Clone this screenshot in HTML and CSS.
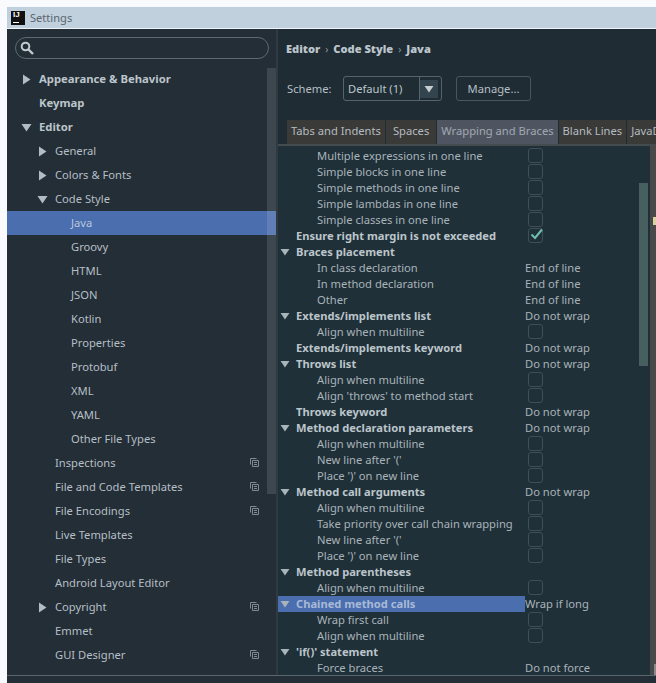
FILE: index.html
```html
<!DOCTYPE html>
<html lang="en">
<head>
<meta charset="utf-8">
<title>Settings</title>
<link rel="stylesheet" href="styles.css">
</head>
<body>
<svg class="defs" width="0" height="0" aria-hidden="true">
  <symbol id="right" viewBox="0 0 9 11"><path d="M1 0.5L8.5 5.5L1 10.5Z" fill="currentColor"/></symbol>
  <symbol id="down" viewBox="0 0 11 9"><path d="M0.5 1H10.5L5.5 8.5Z" fill="currentColor"/></symbol>
  <symbol id="proj" viewBox="0 0 9 9"><path d="M0.5 6.5V0.5H6.5M2.5 2.5H8.5V8.5H2.5ZM4 4.5H7M4 6.5H7" fill="none" stroke="currentColor" stroke-width="1"/></symbol>
</svg>
<div class="window">
  <header class="titlebar">
    <div class="logo"><span class="logo-text">IJ</span><span class="logo-bar"></span></div>
    <span class="title">Settings</span>
  </header>
  <div class="dialog">
    <aside class="sidebar">
      <div class="search">
        <svg class="search-icon" viewBox="0 0 14 14"><circle cx="5.5" cy="5.5" r="3.8" fill="none" stroke="currentColor" stroke-width="2"/><path d="M8.5 8.5L13 13" stroke="currentColor" stroke-width="2.4"/></svg>
      </div>
      <div class="tree">
        <div class="node bold l0"><svg class="arrow ar"><use href="#right"/></svg>Appearance &amp; Behavior</div>
        <div class="node bold l0">Keymap</div>
        <div class="node bold l0"><svg class="arrow ad"><use href="#down"/></svg>Editor</div>
        <div class="node l1"><svg class="arrow ar"><use href="#right"/></svg>General</div>
        <div class="node l1"><svg class="arrow ar"><use href="#right"/></svg>Colors &amp; Fonts</div>
        <div class="node l1"><svg class="arrow ad"><use href="#down"/></svg>Code Style</div>
        <div class="node l2 selected">Java</div>
        <div class="node l2">Groovy</div>
        <div class="node l2">HTML</div>
        <div class="node l2">JSON</div>
        <div class="node l2">Kotlin</div>
        <div class="node l2">Properties</div>
        <div class="node l2">Protobuf</div>
        <div class="node l2">XML</div>
        <div class="node l2">YAML</div>
        <div class="node l2">Other File Types</div>
        <div class="node l1">Inspections<svg class="proj"><use href="#proj"/></svg></div>
        <div class="node l1">File and Code Templates<svg class="proj"><use href="#proj"/></svg></div>
        <div class="node l1">File Encodings<svg class="proj"><use href="#proj"/></svg></div>
        <div class="node l1">Live Templates</div>
        <div class="node l1">File Types</div>
        <div class="node l1">Android Layout Editor</div>
        <div class="node l1"><svg class="arrow ar"><use href="#right"/></svg>Copyright<svg class="proj"><use href="#proj"/></svg></div>
        <div class="node l1">Emmet</div>
        <div class="node l1">GUI Designer<svg class="proj"><use href="#proj"/></svg></div>
      </div>
      <div class="tree-thumb"></div>
    </aside>
    <main class="content">
      <div class="crumbs"><b>Editor</b><i>›</i><b>Code Style</b><i>›</i><b>Java</b></div>
      <div class="scheme">
        <span class="scheme-label">Scheme:</span>
        <div class="combo"><span class="combo-text">Default (1)</span><span class="combo-btn"><svg class="combo-arrow"><use href="#down"/></svg></span></div>
        <div class="button">Manage...</div>
      </div>
      <div class="tabs">
        <span class="tab">Tabs and Indents</span>
        <span class="tab wide">Spaces</span>
        <span class="tab active">Wrapping and Braces</span>
        <span class="tab">Blank Lines</span>
        <span class="tab">JavaD</span>
      </div>
      <div class="split">
        <div class="options">
          <div class="row"><span class="name i2">Multiple expressions in one line</span><span class="box"></span></div>
          <div class="row"><span class="name i2">Simple blocks in one line</span><span class="box"></span></div>
          <div class="row"><span class="name i2">Simple methods in one line</span><span class="box"></span></div>
          <div class="row"><span class="name i2">Simple lambdas in one line</span><span class="box"></span></div>
          <div class="row"><span class="name i2">Simple classes in one line</span><span class="box"></span></div>
          <div class="row"><span class="name i1 strong">Ensure right margin is not exceeded</span><span class="box"><svg class="check" viewBox="0 0 14 12"><path d="M1.5 6.5L5 10L12 1.5" fill="none" stroke="currentColor" stroke-width="2"/></svg></span></div>
          <div class="row"><span class="name i1 strong"><svg class="tw"><use href="#down"/></svg>Braces placement</span></div>
          <div class="row"><span class="name i2">In class declaration</span><span class="val">End of line</span></div>
          <div class="row"><span class="name i2">In method declaration</span><span class="val">End of line</span></div>
          <div class="row"><span class="name i2">Other</span><span class="val">End of line</span></div>
          <div class="row"><span class="name i1 strong"><svg class="tw"><use href="#down"/></svg>Extends/implements list</span><span class="val">Do not wrap</span></div>
          <div class="row"><span class="name i2">Align when multiline</span><span class="box"></span></div>
          <div class="row"><span class="name i1 strong">Extends/implements keyword</span><span class="val">Do not wrap</span></div>
          <div class="row"><span class="name i1 strong"><svg class="tw"><use href="#down"/></svg>Throws list</span><span class="val">Do not wrap</span></div>
          <div class="row"><span class="name i2">Align when multiline</span><span class="box"></span></div>
          <div class="row"><span class="name i2">Align 'throws' to method start</span><span class="box"></span></div>
          <div class="row"><span class="name i1 strong">Throws keyword</span><span class="val">Do not wrap</span></div>
          <div class="row"><span class="name i1 strong"><svg class="tw"><use href="#down"/></svg>Method declaration parameters</span><span class="val">Do not wrap</span></div>
          <div class="row"><span class="name i2">Align when multiline</span><span class="box"></span></div>
          <div class="row"><span class="name i2">New line after '('</span><span class="box"></span></div>
          <div class="row"><span class="name i2">Place ')' on new line</span><span class="box"></span></div>
          <div class="row"><span class="name i1 strong"><svg class="tw"><use href="#down"/></svg>Method call arguments</span><span class="val">Do not wrap</span></div>
          <div class="row"><span class="name i2">Align when multiline</span><span class="box"></span></div>
          <div class="row"><span class="name i2">Take priority over call chain wrapping</span><span class="box"></span></div>
          <div class="row"><span class="name i2">New line after '('</span><span class="box"></span></div>
          <div class="row"><span class="name i2">Place ')' on new line</span><span class="box"></span></div>
          <div class="row"><span class="name i1 strong"><svg class="tw"><use href="#down"/></svg>Method parentheses</span></div>
          <div class="row"><span class="name i2">Align when multiline</span><span class="box"></span></div>
          <div class="row"><span class="name i1 strong hl"><svg class="tw"><use href="#down"/></svg>Chained method calls</span><span class="val">Wrap if long</span></div>
          <div class="row"><span class="name i2">Wrap first call</span><span class="box"></span></div>
          <div class="row"><span class="name i2">Align when multiline</span><span class="box"></span></div>
          <div class="row"><span class="name i1 strong"><svg class="tw"><use href="#down"/></svg>'if()' statement</span></div>
          <div class="row"><span class="name i2">Force braces</span><span class="val">Do not force</span></div>
          <div class="opt-thumb"></div>
        </div>
        <div class="preview"><span class="pv-mark"></span><span class="pv-thumb"></span></div>
      </div>
    </main>
  </div>
  <div class="footer"></div>
</div>
</body>
</html>
```
FILE: styles.css
```css
html, body { margin: 0; height: 100%; background: #f9fafd; overflow: hidden; }
.defs { position: absolute; }
body { font: 11.2px/16px "Noto Sans", sans-serif; color: #b6bfc6; }
.window { display: flex; flex-direction: column; height: 676px; margin: 7px 0 0 7px; background: #232e36; }
.titlebar { flex: none; height: 21px; background: #c0d0dd; display: flex; align-items: center; padding-left: 4px; gap: 5px; border-bottom: 1px solid #eef3f7; }
.logo { width: 14px; height: 14px; background: #111; position: relative; color: #fff; }
.logo-text { position: absolute; left: 2px; top: 0; font: bold 8px/8px "Liberation Sans", sans-serif; }
.logo-bar { position: absolute; left: 2px; bottom: 2px; width: 6px; height: 1px; background: #fff; }
.title { color: #5c6670; font-size: 11.1px; }
.dialog { flex: 1; min-height: 0; display: flex; }
.sidebar { flex: none; width: 269px; position: relative; overflow: hidden; }
.search { height: 20px; margin: 8px 7px 0 8px; border: 1px solid #5d6a72; border-radius: 11px; display: flex; align-items: center; padding-left: 4px; }
.search-icon { width: 14px; height: 14px; color: #c2cad0; }
.tree { margin-top: 8px; }
.node { height: 24px; line-height: 24px; position: relative; white-space: nowrap; }
.bold { font-weight: 700; font-size: 11.3px; color: #bcc5cb; }
.l0 { padding-left: 32px; }
.l1 { padding-left: 48px; }
.l2 { padding-left: 64px; }
.selected { background: #4a6eae; color: #b9c6dc; }
.arrow { position: absolute; color: #b3bcc2; }
.ar { width: 9px; height: 11px; top: 7px; margin-left: -17px; }
.ad { width: 11px; height: 9px; top: 8px; margin-left: -18px; }
.proj { position: absolute; left: 243px; top: 7px; width: 9px; height: 9px; color: #7f8a91; }
.tree-thumb { position: absolute; left: 260px; top: 39px; width: 9px; height: 426px; background: rgba(255, 255, 255, 0.12); }
.content { flex: 1; min-width: 0; border-left: 2px solid #2f3a42; display: flex; flex-direction: column; overflow: hidden; background: #1f2c34; }
.crumbs { margin: 12px 0 0 8px; height: 16px; font-size: 11.1px; font-weight: 700; color: #bcc5cb; display: flex; gap: 5px; }
.crumbs i { font-style: normal; font-weight: 400; color: #8c979e; font-size: 10px; }
.scheme { display: flex; align-items: center; margin: 19px 0 0 9px; height: 25px; }
.scheme-label { flex: none; width: 56px; }
.combo { flex: none; width: 99px; height: 25px; box-sizing: border-box; border: 1px solid #55636b; border-radius: 3px; display: flex; align-items: center; justify-content: space-between; padding-left: 4px; }
.combo-text { color: #bcc5cb; }
.combo-btn { width: 18px; height: 23px; margin-right: 3px; border-left: 1px solid #55636b; display: flex; align-items: center; justify-content: center; position: relative; }
.combo-arrow { width: 18px; height: 18px; padding: 5px 4px; box-sizing: border-box; background: #33444e; color: #c6ced3; }
.button { flex: none; box-sizing: border-box; margin-left: 14px; width: 75px; height: 25px; line-height: 23px; text-align: center; border: 1px solid #465760; border-radius: 3px; }
.tabs { display: flex; margin: 19px 0 0 9px; height: 24px; gap: 1px; white-space: nowrap; }
.tab { padding: 0 4px; line-height: 22px; background: #3a3a38; color: #b4bcc0; flex: none; }
.tab.wide { padding: 0 7px; }
.tab.active { background: #4f5560; color: #a0a9b3; }
.split { flex: 1; min-height: 0; display: flex; border-top: 2px solid #444c50; }
.options { width: 372px; flex: none; padding-top: 2px; position: relative; overflow: hidden; background: #1f3038; }
.row { height: 16px; line-height: 16px; display: flex; white-space: nowrap; position: relative; }
.name { flex: none; width: 247px; box-sizing: border-box; position: relative; overflow: hidden; }
.i1 { padding-left: 18px; font-size: 11.15px; }
.i2 { padding-left: 39px; color: #a9b3ba; }
.strong { font-weight: 700; color: #bcc5cb; }
.hl { background: #4a6eae; color: #a9bad6; }
.tw { position: absolute; left: 2px; top: 4px; width: 10px; height: 8px; color: #a9b3ba; }
.box { box-sizing: border-box; width: 15px; height: 15px; margin: 0 0 0 3px; border: 1px solid #3f4f57; border-radius: 3px; position: relative; flex: none; }
.val { color: #a9b3ba; }
.check { position: absolute; left: 1px; top: -1px; width: 14px; height: 12px; color: #6fbfae; }
.opt-thumb { position: absolute; left: 361px; top: 37px; width: 9px; height: 183px; background: #475f5f; }
.preview { flex: 1; min-width: 0; background: #4a4949; position: relative; overflow: hidden; }
.pv-mark { position: absolute; left: 3px; top: 71px; width: 3px; height: 8px; background: #d8d4a0; }
.pv-thumb { position: absolute; left: 4px; top: 518px; width: 2px; height: 11px; background: #8a8a8a; }
.footer { flex: none; height: 7px; border-top: 1px solid #5a666d; }
```
